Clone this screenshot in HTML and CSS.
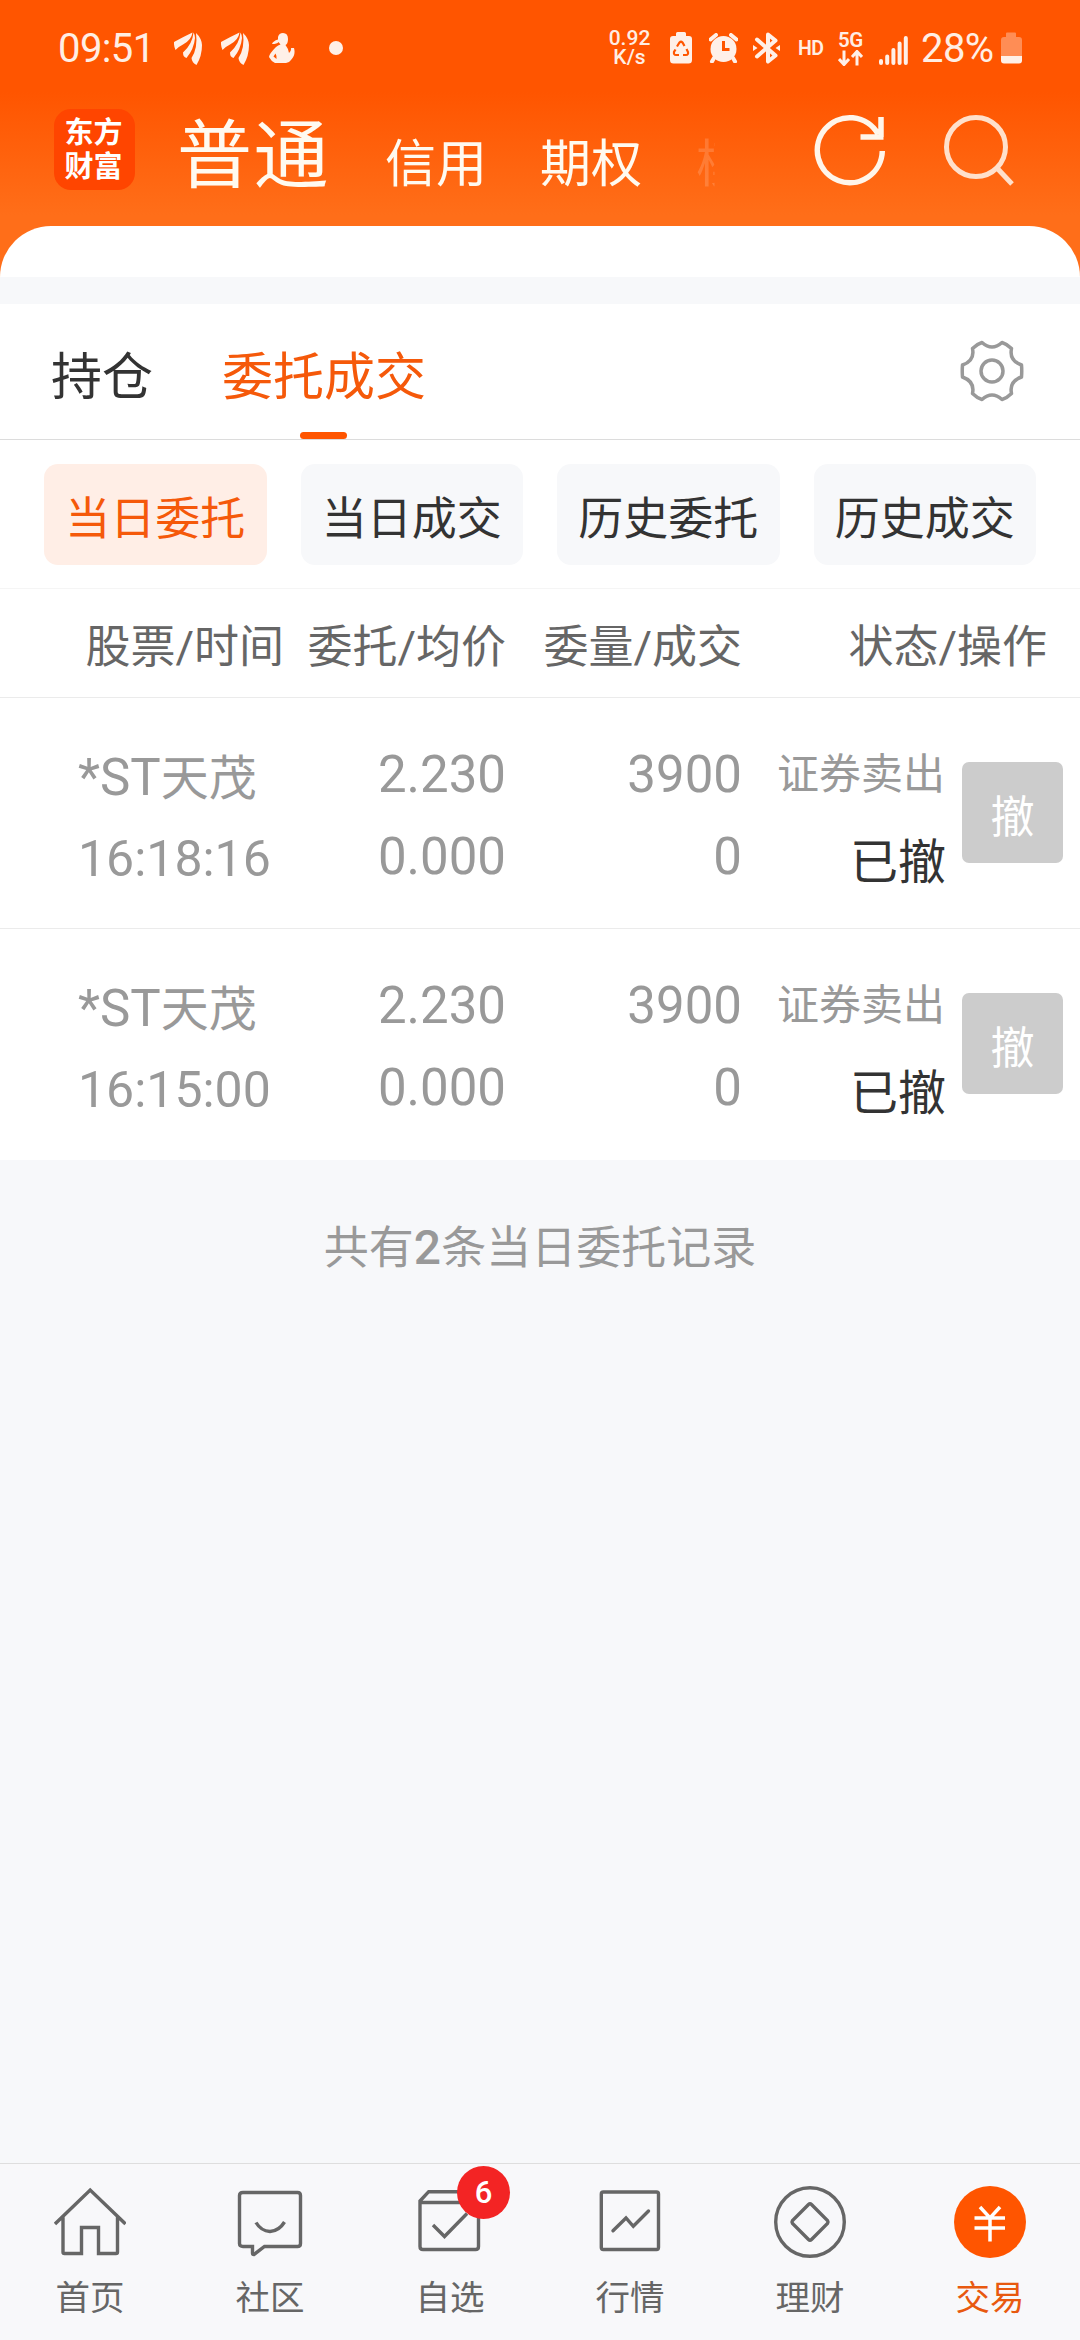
FILE: index.html
```html
<!DOCTYPE html>
<html lang="zh-CN">
<head>
    <meta charset="UTF-8">
    <meta name="viewport" content="width=device-width, initial-scale=1.0">

    <title>委托成交</title>

    <link rel="stylesheet" href="styles.css">
</head>
<body>
    <!-- feather mark, shown twice in the status bar -->
    <svg class="defs" width="0" height="0">
        <symbol id="feather" viewBox="0 0 28 33">
            <path d="M0 10Q9 5 18.500 .5Q17.500 8 9 12.500Q4 15 1.500 18Q-.3 14 0 10Z"/>
            <path d="M19.500 .5Q21 3 21 6Q20 17 12.500 26Q9 25 9 20.500Q18.500 12 19.500 .5Z"/>
            <path d="M22 1Q27.500 6 28 13Q28 24 22.500 33Q18 31 17.500 26Q24 16 22 1Z"/>
        </symbol>
    </svg>

    <div class="header">
        <div class="status-bar">
            <div class="status-left">
                <span class="clock">09:51</span>
                <svg class="ic-feather" width="28" height="33"><use href="#feather"/></svg>
                <svg class="ic-feather second" width="28" height="33"><use href="#feather"/></svg>
                <svg class="ic-person" width="26" height="31" viewBox="0 0 26 31">
                    <path d="M9 4Q10 0 14 0Q19 0 19 6Q19 11 16.500 12Q19 15 20 20Q22.500 18 22 15L25 15Q27 22 22 27Q20 30 17 30L6 30Q2 28 0 24Q0 21 7 14Q9 12 11.500 11.500L9.500 9Q8 11 3 11Q4 8 9 6.500Z"/>
                    <path class="cut" d="M6.500 20.500L4.500 23.500L7.500 26Q8 23 6.500 20.500Z"/>
                </svg>
                <span class="dot"></span>
            </div>
            <div class="status-right">
                <div class="net-speed"><p>0.92</p><p>K/s</p></div>
                <svg class="ic-saver" width="22" height="32" viewBox="0 0 22 32">
                    <path d="M6 4V1.500Q6 0 7.500 0H14.500Q16 0 16 1.500V4H19Q22 4 22 7V28Q22 31.500 18.500 31.500H3.500Q0 31.500 0 28V7Q0 4 3 4Z"/>
                    <path class="line" d="M7 14.500L9.500 10.500Q11 9 12.500 10.500L14.500 14M16.500 17L18 20Q18.500 23 16 23H13M9 23H6Q3.500 23 4 20L5.500 17.500"/>
                </svg>
                <svg class="ic-alarm" width="29" height="30" viewBox="0 0 29 30">
                    <circle cx="14.500" cy="16" r="13"/>
                    <path class="bells" d="M1.500 6.500L7 2M27.500 6.500L22 2M5 25L3 28.500M24 25L26 28.500"/>
                    <path class="line" d="M14.500 8V16.500H20.500"/>
                </svg>
                <svg class="ic-bt" width="27" height="32" viewBox="0 0 27 32">
                    <path class="stroke" d="M4 7.500L22.500 23.500L15 29.500V2.500L22.500 8.500L4 24.500"/>
                    <path d="M0 13L4.500 16L0 19ZM27 13L22.500 16L27 19Z"/>
                </svg>
                <span class="hd">HD</span>
                <div class="net-type">
                    <p>5G</p>
                    <svg width="25" height="16" viewBox="0 0 25 16">
                        <path d="M6 .5V14M1 9L6 14.500L11 9M19 15.500V2M14 7L19 1.500L24 7"/>
                    </svg>
                </div>
                <svg class="ic-signal" width="29" height="29" viewBox="0 0 29 29">
                    <path d="M2 25V27M8.200 20.500V27M14.400 14V27M20.600 7.500V27M26.800 2V27"/>
                </svg>
                <span class="percent">28%</span>
                <svg class="ic-battery" width="21" height="32" viewBox="0 0 21 32">
                    <path class="empty" d="M5 5V1.500Q5 .5 6 .5H14Q15 .5 15 1.500V5H18Q21 5 21 8V24H0V8Q0 5 3 5Z"/>
                    <path d="M0 24H21V28.500Q21 31.500 18 31.500H3Q0 31.500 0 28.500Z"/>
                </svg>
            </div>
        </div>
        <div class="title-bar">
            <div class="logo">东方<br>财富</div>
            <div class="accounts">
                <h1>普通</h1>
                <a>信用</a>
                <a>期权</a>
                <a class="faded">模</a>
            </div>
            <svg class="ic-refresh" width="72" height="74" viewBox="0 0 72 74">
                <path d="M68.300 38A32.500 32.500 0 1 1 64 21M67 4V24M46.500 24H69.500"/>
            </svg>
            <svg class="ic-search" width="72" height="74" viewBox="0 0 72 74">
                <circle cx="34" cy="34" r="29.500"/>
                <path d="M54.500 54.500L70 71"/>
            </svg>
        </div>
        <div class="sheet-top"></div>
    </div>

    <div class="tabs">
        <a class="tab">持仓</a>
        <a class="tab active">委托成交</a>
        <svg class="ic-gear" width="64" height="64" viewBox="-32 -32 64 64">
            <path d="M-10 -28.500Q0 -19.500 10 -28.500Q15 -27 19.500 -22.500Q17 -10.500 29.500 -6Q30 0 29.500 6Q17 10.500 19.500 22.500Q15 27 10 28.500Q0 19.500 -10 28.500Q-15 27 -19.500 22.500Q-17 10.500 -29.500 6Q-30 0 -29.500 -6Q-17 -10.500 -19.500 -22.500Q-15 -27 -10 -28.500Z"/>
            <circle r="11"/>
        </svg>
    </div>

    <div class="chips">
        <a class="chip active">当日委托</a>
        <a class="chip">当日成交</a>
        <a class="chip">历史委托</a>
        <a class="chip">历史成交</a>
    </div>

    <div class="order-head">
        <span>股票/时间</span>
        <span>委托/均价</span>
        <span>委量/成交</span>
        <span>状态/操作</span>
    </div>

    <div class="order">
        <div class="name"><p><span>*ST</span>天茂</p><p class="time">16:18:16</p></div>
        <div class="num"><p>2.230</p><p>0.000</p></div>
        <div class="num"><p>3900</p><p>0</p></div>
        <div class="state"><p>证券卖出</p><p class="result">已撤</p></div>
        <button class="cancel-btn">撤</button>
    </div>
    <div class="order">
        <div class="name"><p><span>*ST</span>天茂</p><p class="time">16:15:00</p></div>
        <div class="num"><p>2.230</p><p>0.000</p></div>
        <div class="num"><p>3900</p><p>0</p></div>
        <div class="state"><p>证券卖出</p><p class="result">已撤</p></div>
        <button class="cancel-btn">撤</button>
    </div>

    <p class="total">共有<b>2</b>条当日委托记录</p>

    <div class="bottom-nav">
        <a class="nav-item">
            <svg width="72" height="72" viewBox="0 0 72 72">
                <path d="M1 38L36.200 4L71.500 38M9 31V66Q9 67.500 10.500 67.500H27.500V41.500H44.500V67.500H62Q63.500 67.500 63.500 66V31"/>
            </svg>
            首页
        </a>
        <a class="nav-item">
            <svg width="72" height="72" viewBox="0 0 72 72">
                <path d="M9 6.500H63.500Q66.500 6.500 66.500 9.500V57.500Q66.500 60.500 63.500 60.500H30.500L20 68.500Q18.500 68.500 18.500 67V60.500H9Q5.500 60.500 5.500 57.500V9.500Q5.500 6.500 9 6.500Z"/>
                <path d="M22 36.500Q27 45 36 45.500Q45 45 50.500 36"/>
            </svg>
            社区
        </a>
        <a class="nav-item">
            <svg width="72" height="72" viewBox="0 0 72 72">
                <path d="M6 16.500H64.500V60.500Q64.500 63.500 61.500 63.500H9Q6 63.500 6 60.500V15L14.700 5.700H56L64.500 15V17"/>
                <path d="M19 39L30.500 50.500L53 27.500"/>
            </svg>
            自选
            <span class="badge">6</span>
        </a>
        <a class="nav-item">
            <svg width="72" height="72" viewBox="0 0 72 72">
                <rect x="7.300" y="6" width="57.200" height="57.500" rx="2"/>
                <path d="M19 44.700L32 32L39.300 40.300L54.500 25" stroke-linecap="round"/>
            </svg>
            行情
        </a>
        <a class="nav-item">
            <svg width="72" height="72" viewBox="0 0 72 72">
                <circle cx="36" cy="36" r="34.300"/>
                <path d="M34.500 18.500Q36 17 37.500 18.500L53.500 34.500Q54.500 36 53.500 37.500L37.500 53.500Q36 55 34.500 53.500L18.500 37.500Q17.500 36 18.500 34.500Z"/>
            </svg>
            理财
        </a>
        <a class="nav-item active">
            <svg width="72" height="72" viewBox="0 0 72 72">
                <circle cx="36" cy="36" r="36"/>
                <path d="M26 21L36 32L46 21M20.500 32H51M20.500 42H51M36 31V55.500"/>
            </svg>
            交易
        </a>
    </div>
</body>
</html>
```

FILE: styles.css
```css
*, *:before, *:after {
    margin: 0;
    padding: 0;
    box-sizing: border-box;
}
body {
    display: flex;
    flex-direction: column;
    height: 2340px;
    background: #f7f8fa;
    font-family: Roboto, "Noto Sans CJK SC", sans-serif;
    color: #333;
    overflow: hidden;
}
svg {
    display: block;
    flex: none;
}
.defs {
    position: absolute;
}

/* header */
.header {
    background: linear-gradient(#ff5500 0, #ff5500 92px, #ff6e19 215px);
}
.status-bar {
    display: flex;
    justify-content: space-between;
    height: 96px;
    padding: 0 58px;
    color: #ffeee4;
}
.status-bar svg {
    fill: #fff0e8;
}
.status-left, .status-right {
    display: flex;
    align-items: center;
    height: 96px;
}
.clock, .percent {
    font-size: 40px;
    line-height: 97px;
    letter-spacing: -0.6px;
}
.clock {
    width: 93px;
}
.ic-feather {
    margin-left: 23px;
}
.ic-feather.second {
    margin-left: 19px;
}
.ic-person {
    margin-left: 20px;
}
.ic-person .cut {
    fill: #ff5500;
}
.dot {
    width: 14px;
    height: 14px;
    margin-left: 34px;
    border-radius: 50%;
    background: #fff0e8;
}
.net-speed {
    width: 43px;
    font-size: 21px;
    font-weight: 500;
    line-height: 19px;
    text-align: center;
}
.ic-saver {
    margin-left: 19px;
}
.ic-saver .line {
    fill: none;
    stroke: #ff5500;
    stroke-width: 2.200;
}
.ic-alarm {
    margin-left: 17px;
}
.ic-alarm .bells {
    fill: none;
    stroke: #fff0e8;
    stroke-width: 4;
    stroke-linecap: round;
}
.ic-alarm .line {
    fill: none;
    stroke: #ff5500;
    stroke-width: 3;
}
.ic-bt {
    margin-left: 15px;
}
.ic-bt .stroke {
    fill: none;
    stroke: #fff0e8;
    stroke-width: 4;
    stroke-linejoin: round;
    stroke-linecap: round;
}
.hd {
    width: 27px;
    margin-left: 18px;
    font-size: 19.500px;
    font-weight: 600;
    letter-spacing: -0.5px;
}
.net-type {
    width: 26px;
    margin-left: 13px;
    font-size: 20.500px;
    font-weight: 600;
    line-height: 20px;
    letter-spacing: -0.5px;
}
.net-type svg {
    fill: none;
    stroke: #fff0e8;
    stroke-width: 3;
}
.ic-signal {
    margin: 4px 0 0 15px;
}
.ic-signal path {
    stroke: #fff0e8;
    stroke-width: 4;
    stroke-linecap: round;
}
.percent {
    width: 73px;
    margin-left: 13px;
}
.ic-battery {
    margin-left: 7px;
}
.ic-battery .empty {
    fill: #ff8d55;
}
.title-bar {
    display: flex;
    height: 130px;
    padding-left: 54px;
}
.logo {
    width: 81px;
    height: 81px;
    margin-top: 13px;
    padding: 7px 2px 0 0;
    border-radius: 17px;
    background: #ff4500;
    color: #fff;
    font-size: 29px;
    font-weight: 700;
    line-height: 34px;
    text-align: center;
}
.accounts {
    display: flex;
    align-items: baseline;
    width: 581px;
    height: 130px;
    padding: 15px 0 0 42px;
    color: #fffaf0;
}
.accounts h1 {
    width: 208px;
    flex: none;
    font-size: 75px;
    font-weight: 400;
    line-height: 90px;
    letter-spacing: 1.500px;
}
.accounts a {
    width: 155px;
    flex: none;
    font-size: 51px;
}
/* fourth account is scrolled out under a fade */
.accounts .faded {
    width: 50px;
    margin-left: 1px;
    color: transparent;
    background: linear-gradient(90deg, rgba(255, 255, 255, 0.16) 18px, transparent 19px);
    -webkit-background-clip: text;
    background-clip: text;
}
.ic-refresh, .ic-search {
    margin-top: 17px;
    fill: none;
    stroke: #fff5ea;
    stroke-width: 5.500;
}
.ic-refresh {
    margin-left: 98px;
}
.ic-search {
    margin-left: 56px;
    stroke: #ffe0cb;
    stroke-width: 5;
}
.sheet-top {
    height: 51px;
    border-radius: 51px 51px 0 0;
    background: #fff;
}

/* main tabs */
.tabs {
    display: flex;
    height: 136px;
    margin-top: 27px;
    padding-left: 51px;
    border-bottom: 1px solid #dcdcdc;
    background: #fff;
}
.tab {
    position: relative;
    padding-top: 12px;
    margin-right: 69px;
    font-size: 51px;
    line-height: 123px;
}
.tab.active {
    color: #f5590a;
}
.tab.active:after {
    content: "";
    position: absolute;
    left: 50%;
    bottom: 0;
    width: 47px;
    height: 7px;
    margin-left: -24px;
    border-radius: 4px;
    background: #ff5500;
}
.ic-gear {
    margin: 35px 56px 0 auto;
    fill: none;
    stroke: #999;
    stroke-width: 3.500;
    stroke-linejoin: round;
}

/* sub tabs */
.chips {
    display: grid;
    grid-template-columns: repeat(4, 1fr);
    gap: 34px;
    height: 149px;
    padding: 24px 44px 0;
    border-bottom: 1px solid #f5f5f5;
    background: #fff;
}
.chip {
    height: 101px;
    padding-top: 11px;
    border-radius: 14px;
    background: #f7f8fa;
    font-size: 45px;
    line-height: 90px;
    text-align: center;
    white-space: nowrap;
}
.chip.active {
    background: #ffeee6;
    color: #f5590a;
}

/* orders */
.order-head, .order {
    display: grid;
    background: #fff;
    text-align: right;
}
.order-head {
    grid-template-columns: 284px 222px 236px 305px;
    height: 109px;
    padding-top: 10px;
    border-bottom: 1px solid #ebebeb;
    color: #666;
    font-size: 45px;
    line-height: 98px;
    white-space: nowrap;
}
.order {
    grid-template-columns: 290px 216px 236px 203px 118px;
    height: 231px;
    border-bottom: 1px solid #ebebeb;
    color: #999;
}
.order + .order {
    border-bottom-color: #fff;
}
.name {
    padding: 40px 0 0 78px;
    font-size: 48px;
    line-height: 80px;
    text-align: left;
}
.name span {
    font-size: 51px;
}
.name .time {
    font-size: 50px;
}
.num {
    padding-top: 36px;
    font-size: 51px;
    line-height: 82px;
}
.state {
    padding-top: 36px;
    font-size: 42px;
    line-height: 82px;
}
.state .result {
    margin-right: -1px;
    color: #333;
    font-size: 48px;
    line-height: 94px;
}
.cancel-btn {
    justify-self: end;
    width: 101px;
    height: 101px;
    margin-top: 64px;
    padding-top: 3px;
    border: none;
    border-radius: 7px;
    background: #ccc;
    color: #fff;
    font-family: inherit;
    font-size: 44px;
}
.total {
    padding-top: 42px;
    color: #999;
    font-size: 45px;
    line-height: 92px;
    text-align: center;
}
.total b {
    font-size: 48px;
    font-weight: 500;
}

/* bottom nav */
.bottom-nav {
    display: grid;
    grid-template-columns: repeat(6, 1fr);
    height: 177px;
    margin-top: auto;
    border-top: 1px solid #dedede;
    background: #f8f8fa;
}
.nav-item {
    position: relative;
    padding-top: 22px;
    color: #666;
    font-size: 34.500px;
    line-height: 80px;
    text-align: center;
}
.nav-item svg {
    margin: 0 auto;
    fill: none;
    stroke: #666;
    stroke-width: 3.400;
}
.nav-item.active {
    color: #e8590f;
}
.nav-item.active circle {
    fill: #ff5500;
    stroke: none;
}
.nav-item.active path {
    stroke: #fff;
    stroke-width: 3.500;
}
.badge {
    position: absolute;
    top: 2px;
    left: 97px;
    width: 53px;
    height: 53px;
    border-radius: 50%;
    background: #f32424;
    color: #fff;
    font-size: 31px;
    font-weight: 500;
    line-height: 54px;
}
```
